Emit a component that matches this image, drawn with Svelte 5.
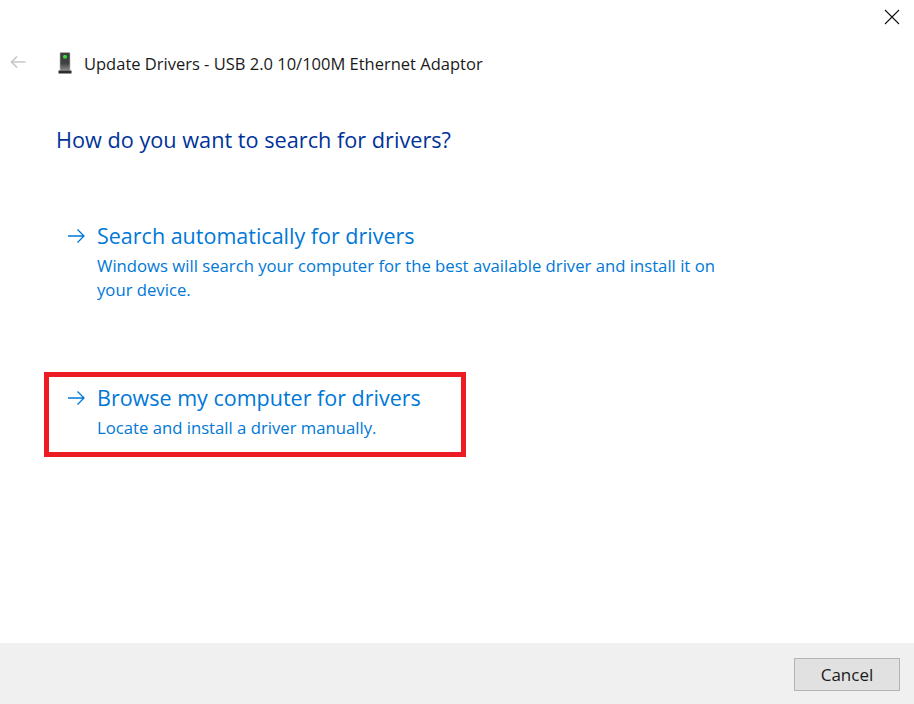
<script>
  const options = [
    {
      title: "Search automatically for drivers",
      text: "Windows will search your computer for the best available driver and install it on your device.",
      picked: false,
    },
    {
      title: "Browse my computer for drivers",
      text: "Locate and install a driver manually.",
      picked: true,
    },
  ];
</script>

<div class="dialog">
  <div class="closebar">
    <button class="close" aria-label="Close">
      <svg width="16" height="16" viewBox="0 0 16 16"><path d="M1 1 L15 15 M15 1 L1 15" stroke="#111" stroke-width="1.1" fill="none" /></svg>
    </button>
  </div>

  <div class="header">
    <svg class="back" width="16" height="14" viewBox="0 0 16 14"><path d="M15.5 7 H1.5 M7 1.5 L1.5 7 L7 12.5" stroke="#c8c8c8" stroke-width="1.7" fill="none" /></svg>
    <svg class="device" width="14" height="22" viewBox="0 0 14 22">
      <defs>
        <linearGradient id="case" x1="0" y1="0" x2="0" y2="1">
          <stop offset="0" stop-color="#3a3d3c" />
          <stop offset="0.6" stop-color="#3f4241" />
          <stop offset="1" stop-color="#8a8d8c" />
        </linearGradient>
      </defs>
      <rect x="2" y="0.5" width="10" height="18" rx="1" fill="url(#case)" stroke="#b5b8b7" stroke-width="0.6" />
      <rect x="5.2" y="3" width="3.6" height="3.6" rx="1.2" fill="#35e03a" />
      <rect x="0.5" y="18.5" width="13" height="3" fill="#2b2d2c" />
    </svg>
    <span class="window-title">Update Drivers - USB 2.0 10/100M Ethernet Adaptor</span>
  </div>

  <div class="content">
    <h1>How do you want to search for drivers?</h1>

    {#each options as opt}
      <div class="option" class:picked={opt.picked}>
        <svg class="arrow" width="18" height="16" viewBox="0 0 18 16"><path d="M1 8 H17 M10.5 1.5 L17 8 L10.5 14.5" stroke="#0078d7" stroke-width="1.3" fill="none" /></svg>
        <div class="option-body">
          <div class="option-title">{opt.title}</div>
          <div class="option-text">{opt.text}</div>
        </div>
      </div>
    {/each}
  </div>

  <div class="footer">
    <button class="cancel">Cancel</button>
  </div>
</div>

<style>
  :global(body) {
    background: #fff;
  }
  .dialog {
    width: 914px;
    height: 704px;
    display: flex;
    flex-direction: column;
    font-family: "Open Sans", "Noto Sans", sans-serif;
  }
  .closebar {
    height: 47px;
    display: flex;
    justify-content: flex-end;
  }
  .close {
    border: 0;
    background: none;
    padding: 4px 14px 0 0;
    height: 32px;
  }
  .header {
    display: flex;
    align-items: center;
    height: 32px;
    padding-left: 10px;
  }
  .back {
    margin: 0 32px 3px 0;
  }
  .device {
    margin-right: 12px;
  }
  .window-title {
    font-size: 16.5px;
    color: #1a1a1a;
  }
  .content {
    flex: 1;
    padding: 45px 0 0 56px;
  }
  h1 {
    margin: 0 0 54px;
    font-size: 21.7px;
    font-weight: 400;
    line-height: 32px;
    color: #003399;
  }
  .option {
    display: flex;
    width: 690px;
    padding: 4px 0 12px 18px;
    margin-bottom: 53px;
    margin-left: -12px;
    box-sizing: border-box;
    border: 5px solid transparent;
  }
  .option.picked {
    width: 422px;
    border-color: #ed1c24;
  }
  .arrow {
    margin: 9px 12px 0 0;
    flex-shrink: 0;
  }
  .option-title {
    font-size: 21.5px;
    line-height: 34px;
    color: #0078d7;
  }
  .option-text {
    margin-top: 1px;
    font-size: 16.7px;
    line-height: 24px;
    color: #0078d7;
  }
  .footer {
    height: 61px;
    background: #f0f0f0;
    display: flex;
    justify-content: flex-end;
    align-items: flex-start;
    padding: 15px 14px 0 0;
    box-sizing: border-box;
  }
  .cancel {
    width: 106px;
    height: 33px;
    background: #e1e1e1;
    border: 1px solid #b4b4b4;
    font: inherit;
    font-size: 17px;
    color: #1a1a1a;
  }
</style>
